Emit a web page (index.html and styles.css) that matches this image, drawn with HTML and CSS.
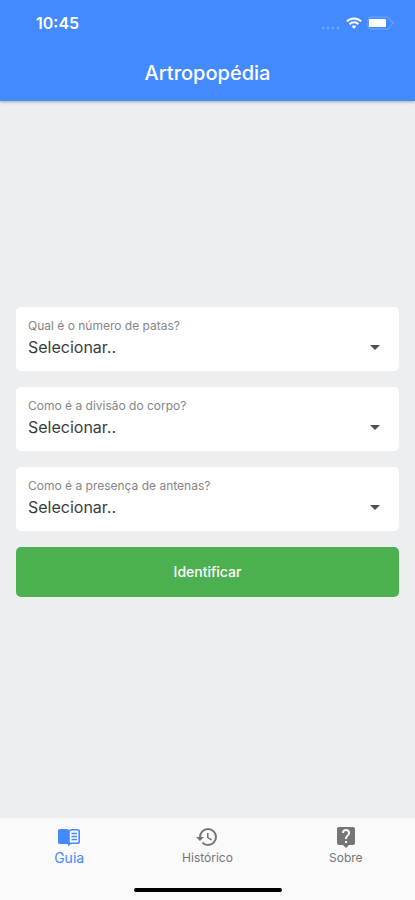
FILE: index.html
```html
<!DOCTYPE html>
<html lang="pt-BR">
<head>
    <meta charset="UTF-8">
    <meta name="viewport" content="width=device-width, initial-scale=1.0">
    <title>Artropopédia</title>
    <link rel="stylesheet" href="styles.css">
</head>
<body>
    <header class="app-header">
        <div class="status-bar">
            <span class="status-time">10:45</span>
            <div class="status-icons">
                <svg class="signal" width="20" height="4" viewBox="0 0 20 4">
                    <circle cx="2" cy="2" r="1.4"/>
                    <circle cx="7" cy="2" r="1.4"/>
                    <circle cx="12" cy="2" r="1.4"/>
                    <circle cx="17" cy="2" r="1.4"/>
                </svg>
                <svg width="16" height="12" viewBox="0 0 16 12" fill="none" stroke="#fff" stroke-width="2">
                    <path d="M1 4.4a10 10 0 0 1 14 0"/>
                    <path d="M3.6 7.2a6.2 6.2 0 0 1 8.8 0"/>
                    <path d="M8 11.8 5.7 9.4a3.3 3.3 0 0 1 4.6 0z" fill="#fff" stroke="none"/>
                </svg>
                <svg width="28" height="14" viewBox="0 0 28 14">
                    <path d="M4 1h16q2 0 3 1.5V4l3.5 3L23 10v1.5q-1 1.5-3 1.5H4q-3 0-3-3V4q0-3 3-3z" fill="none" stroke="#74a9ff"/>
                    <rect x="2" y="3" width="17" height="8" rx="1" fill="#fff"/>
                </svg>
            </div>
        </div>
        <h1>Artropopédia</h1>
    </header>

    <main class="content">
        <form class="guide-form">
            <div class="field">
                <label for="patas">Qual é o número de patas?</label>
                <select id="patas" name="patas">
                    <option value="">Selecionar..</option>
                </select>
                <span class="arrow"></span>
            </div>
            <div class="field">
                <label for="corpo">Como é a divisão do corpo?</label>
                <select id="corpo" name="corpo">
                    <option value="">Selecionar..</option>
                </select>
                <span class="arrow"></span>
            </div>
            <div class="field">
                <label for="antenas">Como é a presença de antenas?</label>
                <select id="antenas" name="antenas">
                    <option value="">Selecionar..</option>
                </select>
                <span class="arrow"></span>
            </div>
            <button type="button" class="submit-btn">Identificar</button>
        </form>
    </main>

    <footer class="tab-bar">
        <nav class="tabs">
            <a href="#guia" class="tab active">
                <svg width="24" height="24" viewBox="0 0 24 24">
                    <path d="M1 5.5Q1 4 3 4h6q2 0 3 1v15q-1-1-3-1H3q-2 0-2-1.5z" fill="currentColor"/>
                    <path d="M12 6q1-1.300 3-1.300h5q2.200 0 2.200 1.500v10.600q0 1.500-2.200 1.500h-5q-2 0-3 1.200z" fill="none" stroke="currentColor" stroke-width="1.600"/>
                    <path d="M14.500 8.500h5.500M14.500 11.500h5.500M14.500 14.500h5.500" fill="none" stroke="currentColor" stroke-width="1.500"/>
                </svg>
                <span>Guia</span>
            </a>
            <a href="#historico" class="tab">
                <svg width="24" height="24" viewBox="0 0 24 24" fill="currentColor">
                    <path d="M13 3a9 9 0 0 0-9 9H1l3.890 3.890.07.14L9 12H6a7 7 0 1 1 7 7c-1.930 0-3.680-.79-4.940-2.060l-1.420 1.420A8.950 8.950 0 0 0 13 21a9 9 0 0 0 0-18zm-1 5v5l4.280 2.540.72-1.210-3.500-2.080V8H12z"/>
                </svg>
                <span>Histórico</span>
            </a>
            <a href="#sobre" class="tab">
                <svg width="24" height="24" viewBox="0 0 24 24" fill="currentColor">
                    <path d="M19 2H5a2 2 0 0 0-2 2v14c0 1.100.9 2 2 2h4l3 3 3-3h4c1.100 0 2-.9 2-2V4a2 2 0 0 0-2-2zm-6 16h-2v-2h2v2zm2.070-7.750-.9.920C13.450 11.900 13 12.500 13 14h-2v-.5c0-1.100.45-2.100 1.170-2.830l1.240-1.260c.37-.36.59-.86.59-1.410a2 2 0 0 0-4 0H8a4 4 0 0 1 8 0c0 .88-.36 1.680-.93 2.250z"/>
                </svg>
                <span>Sobre</span>
            </a>
        </nav>
        <div class="home-indicator"></div>
    </footer>
</body>
</html>
```
FILE: styles.css
```css
* {
    box-sizing: border-box;
}

body {
    font-family: Inter, Roboto, sans-serif;
    margin: 0;
    min-height: 100vh;
    display: flex;
    flex-direction: column;
    background: #eceef0;
}

/* Header */
.app-header {
    position: relative;
    padding-bottom: 1px;
    background: #448aff;
    color: white;
    box-shadow: 0 1px 3px rgba(0, 0, 0, 0.3);
}

.status-bar {
    display: flex;
    align-items: center;
    justify-content: space-between;
    height: 46px;
    padding: 0 20px 0 36px;
}

.status-time {
    font-size: 16px;
    font-weight: 600;
}

.status-icons {
    display: flex;
    align-items: center;
    gap: 5px;
}

.signal {
    align-self: flex-end;
    fill: #6ea5ff;
}

.app-header h1 {
    margin: 0;
    font-size: 20px;
    font-weight: 500;
    line-height: 54px;
    text-align: center;
}

/* Form */
.content {
    flex: 1;
    display: flex;
    flex-direction: column;
    justify-content: center;
    padding: 0 16px;
}

.field {
    position: relative;
    height: 64px;
    margin-bottom: 16px;
    padding: 11px 12px;
    background: white;
    border-radius: 5px;
}

.field label {
    display: block;
    font-size: 12px;
    line-height: 16px;
    color: #858585;
}

.field select {
    display: block;
    width: 100%;
    height: 26px;
    padding: 0;
    border: none;
    outline: none;
    appearance: none;
    background: transparent;
    color: #3c3c3c;
    font-family: inherit;
    font-size: 16px;
}

.arrow {
    position: absolute;
    right: 19px;
    top: 38px;
    border: 5px solid transparent;
    border-top-color: #505050;
    border-bottom: none;
    pointer-events: none;
}

.submit-btn {
    display: block;
    width: 100%;
    height: 50px;
    margin-bottom: 16px;
    border: none;
    border-radius: 5px;
    background: #4caf50;
    color: white;
    font-family: inherit;
    font-size: 14px;
    font-weight: 500;
    cursor: pointer;
}

/* Bottom navigation */
.tab-bar {
    background: #fafafa;
    padding-bottom: 8px;
}

.tabs {
    display: flex;
    height: 70px;
    padding-top: 7px;
}

.tab {
    flex: 1;
    display: flex;
    flex-direction: column;
    align-items: center;
    color: #757575;
    font-size: 12px;
    line-height: 18px;
    text-decoration: none;
}

.tab.active {
    color: #448aff;
    font-size: 14px;
}

.home-indicator {
    width: 148px;
    height: 4px;
    margin: 0 auto;
    border-radius: 2px;
    background: black;
}
```
